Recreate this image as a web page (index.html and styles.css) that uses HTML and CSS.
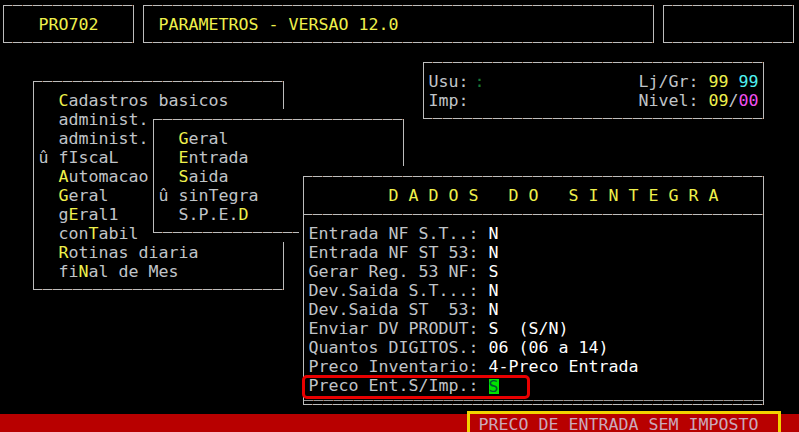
FILE: index.html
```html
<!DOCTYPE html>
<html lang="pt">
<head>
    <meta charset="UTF-8">
    <meta name="viewport" content="width=device-width, initial-scale=1.0">
    <title>PRO702 - Parametros</title>
    <link rel="stylesheet" href="styles.css">
</head>
<body>
    <div class="screen">
        <!-- cabecalho -->
        <div class="win w-prog">
            <div class="frame"></div>
            <div class="rows">
                <div class="row y">   PRO702</div>
            </div>
        </div>
        <div class="win w-title">
            <div class="frame"></div>
            <div class="rows">
                <div class="row y"> PARAMETROS - VERSAO 12.0</div>
            </div>
        </div>
        <div class="win w-blank">
            <div class="frame"></div>
        </div>

        <!-- usuario / loja -->
        <div class="win w-info">
            <div class="frame"></div>
            <div class="rows">
                <div class="row">Usu: <span class="usr">:</span>               Lj/Gr: <span class="y">99</span> <span class="c">99</span></div>
                <div class="row">Imp:                 Nivel: <span class="y">09</span>/<span class="m">00</span></div>
            </div>
        </div>

        <!-- menu principal -->
        <div class="win w-menu">
            <div class="frame"></div>
            <div class="rows">
                <div class="row">  <span class="y">C</span>adastros basicos</div>
                <div class="row">  administ.</div>
                <div class="row">  administ.</div>
                <div class="row">û fIscaL</div>
                <div class="row">  <span class="y">A</span>utomacao</div>
                <div class="row">  <span class="y">G</span>eral</div>
                <div class="row">  g<span class="y">E</span>ral1</div>
                <div class="row">  con<span class="y">T</span>abil</div>
                <div class="row">  <span class="y">R</span>otinas diaria</div>
                <div class="row">  fi<span class="y">N</span>al de Mes</div>
            </div>
        </div>

        <!-- submenu fiscal -->
        <div class="win w-sub">
            <div class="frame"></div>
            <div class="rows">
                <div class="row">  <span class="y">G</span>eral</div>
                <div class="row">  <span class="y">E</span>ntrada</div>
                <div class="row">  <span class="y">S</span>aida</div>
                <div class="row">û sinTegra</div>
                <div class="row">  S.P.E.<span class="y">D</span></div>
            </div>
        </div>

        <!-- dados do sintegra -->
        <div class="win w-sint">
            <div class="frame"></div>
            <div class="sep"></div>
            <div class="rows">
                <div class="row y">        D A D O S   D O   S I N T E G R A</div>
                <div class="row"></div>
                <div class="row">Entrada NF S.T..: <span class="w">N</span></div>
                <div class="row">Entrada NF ST 53: <span class="w">N</span></div>
                <div class="row">Gerar Reg. 53 NF: <span class="w">S</span></div>
                <div class="row">Dev.Saida S.T...: <span class="w">N</span></div>
                <div class="row">Dev.Saida ST  53: <span class="w">N</span></div>
                <div class="row">Enviar DV PRODUT: <span class="w">S  (S/N)</span></div>
                <div class="row">Quantos DIGITOS.: <span class="w">06 (06 a 14)</span></div>
                <div class="row">Preco Inventario: <span class="w">4-Preco Entrada</span></div>
                <div class="row">Preco Ent.S/Imp.: <span class="sel">S</span></div>
            </div>
        </div>

        <div class="status">PRECO DE ENTRADA SEM IMPOSTO</div>
    </div>

    <div class="mark mark-red"></div>
    <div class="mark mark-yellow"></div>
</body>
</html>
```

FILE: styles.css
```css
:root {
    --cw: 10px;
    --rh: 19.05px;
    --fg: #c0c4c8;
    --yellow: #eef04c;
    --line: #bdbdbd;
    --tick: #8a5634;
    --red: #b80000;
}

* {
    box-sizing: border-box;
}

body {
    margin: 0;
    background: #000;
    color: var(--fg);
    font-family: "DejaVu Sans Mono", "Liberation Mono", monospace;
    font-size: 16.61px;
    line-height: var(--rh);
    overflow: hidden;
}

.screen {
    position: relative;
    width: 801px;
    height: 440px;
    margin: -5.5px 0 0 -1.5px;
}

/* janelas do terminal */
.win {
    position: absolute;
    background: #000;
}

.frame {
    position: absolute;
    top: 10px;
    left: 4.5px;
    right: 5px;
    bottom: 9px;
    border: 1px solid var(--line);
    border-image: repeating-linear-gradient(90deg, var(--line) 0 9px, var(--tick) 9px 10px) 1;
}

.sep {
    position: absolute;
    left: 4.5px;
    right: 5px;
    top: calc(2 * var(--rh) + 10px);
    height: 1px;
    background: repeating-linear-gradient(90deg, var(--line) 0 9px, var(--tick) 9px 10px);
}

.rows {
    position: relative;
    display: flex;
    flex-direction: column;
    align-items: flex-start;
    padding: calc(var(--rh) + 1px) 0 0 var(--cw);
}

.row {
    height: var(--rh);
    white-space: pre;
}

.w-prog {
    left: 0;
    top: 0;
    width: 140px;
    height: calc(3 * var(--rh));
}

.w-title {
    left: 140px;
    top: 0;
    width: 520px;
    height: calc(3 * var(--rh));
}

.w-blank {
    left: 660px;
    top: 0;
    width: 140px;
    height: calc(3 * var(--rh));
}

.w-info {
    left: 420px;
    top: calc(3 * var(--rh));
    width: 350px;
    height: calc(4 * var(--rh));
}

.w-menu {
    left: 30px;
    top: calc(4 * var(--rh));
    width: 260px;
    height: calc(12 * var(--rh));
}

.w-sub {
    left: 150px;
    top: calc(6 * var(--rh));
    width: 260px;
    height: calc(7 * var(--rh));
}

.w-sint {
    left: 300px;
    top: calc(9 * var(--rh));
    width: 470px;
    height: calc(13 * var(--rh));
}

.w-sint .frame::after {
    content: "";
    position: absolute;
    left: 0;
    right: 0;
    bottom: 3px;
    height: 1px;
    background: repeating-linear-gradient(90deg, #9a9a9a 0 9px, var(--tick) 9px 10px);
}

/* cores */
.y { color: var(--yellow); }
.w { color: #fff; }
.c { color: #4ff0f0; }
.m { color: #f050f0; }

.usr {
    position: relative;
    left: -4px;
    color: #187a36;
}

.sel {
    display: inline-block;
    width: var(--cw);
    height: 15px;
    line-height: 15px;
    vertical-align: -1px;
    background: #00e400;
    color: #053;
}

.status {
    position: absolute;
    left: 0;
    right: 0;
    top: calc(22 * var(--rh));
    height: 24px;
    padding: 1px 0 0 480px;
    background: var(--red);
    color: #cba9bb;
    white-space: pre;
}

/* marcas de destaque */
.mark {
    position: absolute;
    pointer-events: none;
}

.mark-red {
    left: 302px;
    top: 375px;
    width: 228px;
    height: 24px;
    border: 3px solid #e80000;
    border-radius: 5px;
}

.mark-yellow {
    left: 467px;
    top: 411px;
    width: 314px;
    height: 26px;
    border: 3px solid #f2d200;
}
```
